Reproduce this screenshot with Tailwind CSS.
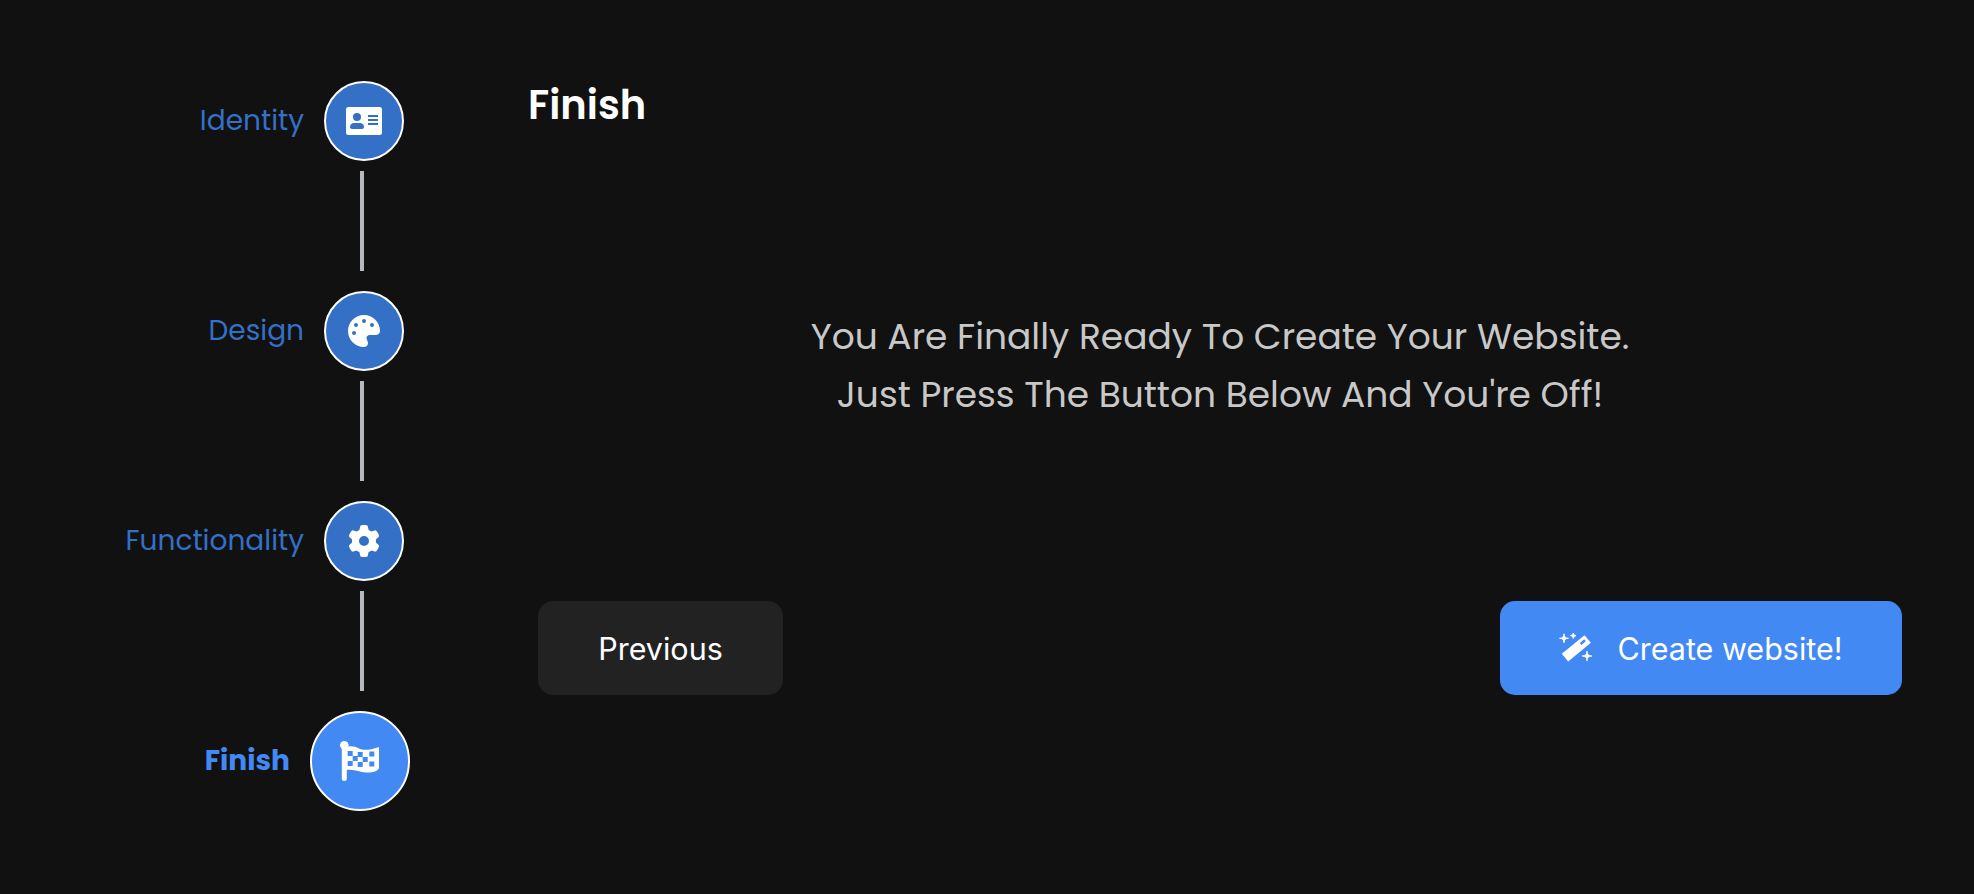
<!DOCTYPE html>
<html lang="en">

<head>
    <meta charset="UTF-8" />
    <title>Finish</title>
    <script src="https://cdn.jsdelivr.net/npm/@tailwindcss/browser@4"></script>
</head>

<body class="bg-[#111111] h-[894px] overflow-hidden font-['Poppins','Open_Sans',sans-serif]">
    <div class="flex h-full">
        <!-- Stepper -->
        <div class="w-[410px] pt-[81px] flex flex-col items-end shrink-0">
            <div class="flex items-center gap-[20px] h-[80px] mr-[6px]">
                <span class="text-[#3470c6] text-[28px]">Identity</span>
                <div class="w-[80px] h-[80px] rounded-full bg-[#3470c6] border-2 border-white flex items-center justify-center">
                    <svg width="36" height="28" viewBox="0 0 36 28"><rect width="36" height="28" rx="2.5" fill="#fff"/><circle cx="11" cy="10" r="4" fill="#3470c6"/><path d="M4 20c0-2.500 2-4 4-4h6c2 0 4 1.500 4 4 0 1.200-.8 2-2 2H6c-1.200 0-2-.8-2-2z" fill="#3470c6"/><path d="M22 9h10M22 13h10M22 17h10" stroke="#3470c6" stroke-width="2"/></svg>
                </div>
            </div>
            <div class="w-[80px] mr-[6px] pl-[36px] pt-[10px] pb-[20px]"><div class="w-[4px] h-[100px] bg-[#b5b8bc]"></div></div>
            <div class="flex items-center gap-[20px] h-[80px] mr-[6px]">
                <span class="text-[#3470c6] text-[28px]">Design</span>
                <div class="w-[80px] h-[80px] rounded-full bg-[#3470c6] border-2 border-white flex items-center justify-center">
                    <svg width="32" height="32" viewBox="0 0 512 512" fill="#fff"><path d="M512 256c0 .9 0 1.800 0 2.700c-.4 36.500-33.600 61.300-70.100 61.300H344c-26.500 0-48 21.500-48 48c0 3.400 .4 6.700 1 9.900c2.100 10.200 6.500 20 10.800 29.900c6.100 13.800 12.100 27.500 12.100 42c0 31.800-21.600 60.700-53.400 62c-3.500 .1-7 .2-10.600 .2C114.600 512 0 397.400 0 256S114.600 0 256 0S512 114.600 512 256zM128 288a32 32 0 1 0 -64 0 32 32 0 1 0 64 0zm0-96a32 32 0 1 0 0-64 32 32 0 1 0 0 64zM288 96a32 32 0 1 0 -64 0 32 32 0 1 0 64 0zm96 96a32 32 0 1 0 0-64 32 32 0 1 0 0 64z"/></svg>
                </div>
            </div>
            <div class="w-[80px] mr-[6px] pl-[36px] pt-[10px] pb-[20px]"><div class="w-[4px] h-[100px] bg-[#b5b8bc]"></div></div>
            <div class="flex items-center gap-[20px] h-[80px] mr-[6px]">
                <span class="text-[#3470c6] text-[28px]">Functionality</span>
                <div class="w-[80px] h-[80px] rounded-full bg-[#3470c6] border-2 border-white flex items-center justify-center">
                    <svg width="32" height="32" viewBox="0 0 512 512" fill="#fff"><path d="M495.900 166.600c3.200 8.700 .5 18.400-6.400 24.600l-43.300 39.400c1.100 8.300 1.700 16.800 1.700 25.400s-.6 17.100-1.700 25.400l43.300 39.400c6.900 6.200 9.600 15.900 6.400 24.600c-4.400 11.900-9.700 23.300-15.800 34.300l-4.700 8.100c-6.600 11-14 21.400-22.100 31.200c-5.900 7.200-15.700 9.600-24.500 6.800l-55.700-17.700c-13.400 10.300-28.200 18.900-44 25.400l-12.500 57.100c-2 9.100-9 16.300-18.200 17.800c-13.800 2.300-28 3.500-42.500 3.500s-28.700-1.200-42.500-3.500c-9.200-1.500-16.200-8.700-18.200-17.800l-12.500-57.100c-15.800-6.500-30.600-15.100-44-25.400L83.100 425.900c-8.800 2.800-18.600 .3-24.500-6.800c-8.100-9.800-15.500-20.200-22.100-31.200l-4.700-8.100c-6.100-11-11.400-22.400-15.800-34.300c-3.200-8.700-.5-18.400 6.400-24.600l43.300-39.400C64.600 273.100 64 264.600 64 256s.6-17.100 1.700-25.400L22.400 191.200c-6.900-6.200-9.600-15.900-6.400-24.600c4.400-11.900 9.700-23.300 15.800-34.300l4.700-8.100c6.600-11 14-21.400 22.100-31.200c5.900-7.200 15.700-9.600 24.500-6.800l55.700 17.700c13.400-10.300 28.200-18.900 44-25.400l12.500-57.100c2-9.100 9-16.300 18.200-17.800C227.300 1.200 241.500 0 256 0s28.700 1.200 42.500 3.500c9.200 1.500 16.200 8.700 18.200 17.800l12.500 57.100c15.800 6.500 30.600 15.100 44 25.400l55.700-17.700c8.800-2.800 18.600-.3 24.500 6.800c8.100 9.800 15.500 20.200 22.100 31.200l4.700 8.100c6.100 11 11.400 22.400 15.800 34.300zM256 336a80 80 0 1 0 0-160 80 80 0 1 0 0 160z"/></svg>
                </div>
            </div>
            <div class="w-[80px] mr-[6px] pl-[36px] pt-[10px] pb-[20px]"><div class="w-[4px] h-[100px] bg-[#b5b8bc]"></div></div>
            <div class="flex items-center gap-[20px] h-[100px]">
                <span class="text-[#4289f4] text-[28px] font-bold">Finish</span>
                <div class="w-[100px] h-[100px] rounded-full bg-[#4289f4] border-2 border-white flex items-center justify-center">
                    <svg width="40" height="40" viewBox="0 0 40 40">
                        <path d="M4.300 4v33.500" stroke="#fff" stroke-width="5" stroke-linecap="round"/>
                        <circle cx="4.300" cy="4.300" r="4.300" fill="#fff"/>
                        <path d="M6 6c5-1.500 9-.5 13 1.500s10 2 20-1.500v21c-1 3-6 5-13 4.500-7-.5-12-4-20-2.500z" fill="#fff"/>
                        <path d="M7.700 10h5v5h-5zM17.700 11h5v5h-5zM29.300 10.500h5v5h-5zM12.700 15h5v5h-5zM22.700 16h5v5h-5zM7.700 20h5v5h-5zM17.700 21h5v5h-5zM29.300 20.500h5v5h-5z" fill="#4289f4"/>
                    </svg>
                </div>
            </div>
        </div>
        <!-- Panel -->
        <div class="flex-1 flex flex-col pl-[128px] pr-[72px]">
            <h1 class="text-white text-[40px] font-semibold mt-[75px] -ml-[10px]">Finish</h1>
            <div class="text-[#c8c8c8] text-[36px] leading-[58px] text-center mt-[173px]">
                <p>You Are Finally Ready To Create Your Website.</p>
                <p>Just Press The Button Below And You're Off!</p>
            </div>
            <div class="flex justify-between mt-[177px] font-['Inter',sans-serif] text-[30.5px] text-white">
                <button class="bg-[#222222] rounded-[15px] w-[245px] h-[94px] pt-[1px]">Previous</button>
                <button class="bg-[#4289f4] rounded-[15px] w-[402px] h-[94px] flex items-center justify-center gap-[25px]">
                    <svg width="33" height="31" viewBox="0 0 33 31" fill="#fff">
                        <path d="M6 24.700 28.700 6" stroke="#fff" stroke-width="10" stroke-linejoin="round"/>
                        <path d="M21.700 11 26 7.300" stroke="#4289f4" stroke-width="2.500"/>
                        <path d="M5 .8Q5 5.300 9.500 5.300 5 5.300 5 9.800 5 5.300 .5 5.300 5 5.300 5 .8zM14.300 0Q14.300 2.700 17 2.700 14.300 2.700 14.300 5.500 14.300 2.700 11.500 2.700 14.300 2.700 14.300 0zM28 18.200Q28 23 32.800 23 28 23 28 27.800 28 23 23.200 23 28 23 28 18.200z" stroke="#fff" stroke-width="1" stroke-linejoin="round"/>
                    </svg>
                    <span class="pt-[1px]">Create website!</span>
                </button>
            </div>
        </div>
    </div>
</body>

</html>
